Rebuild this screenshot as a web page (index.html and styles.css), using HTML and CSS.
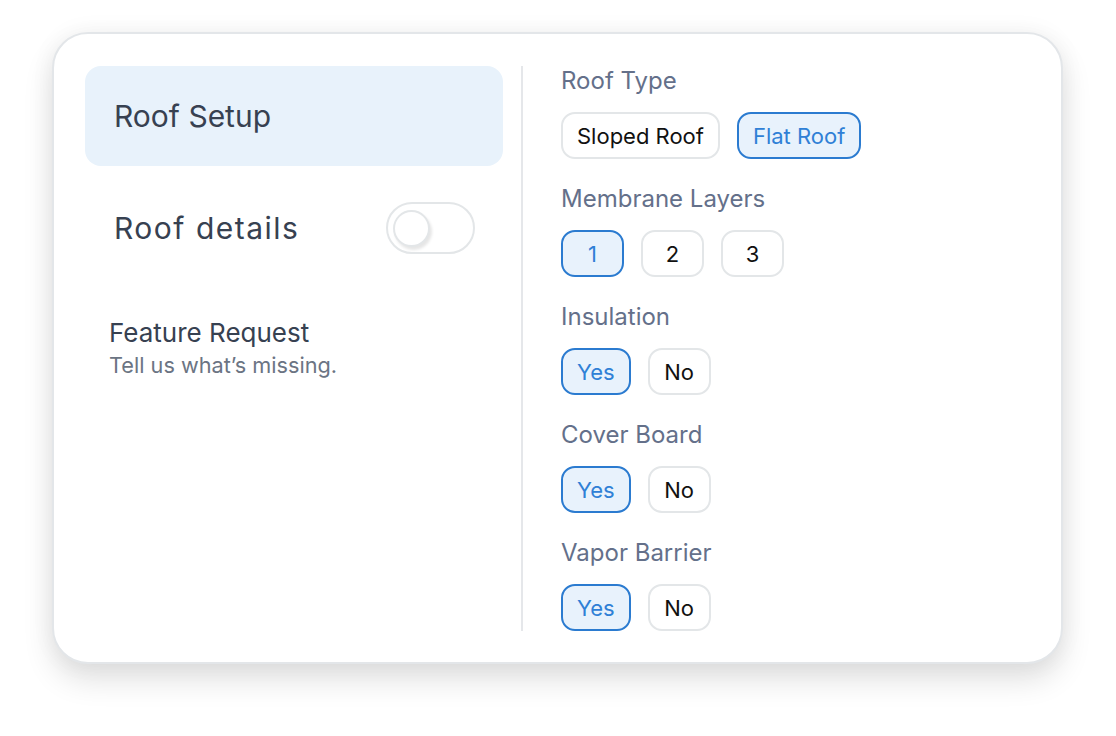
FILE: index.html
```html
<!DOCTYPE html>
<html lang="en">
<head>
<meta charset="utf-8">
<title>Roof Setup</title>
<link rel="stylesheet" href="styles.css">
</head>
<body>
<div class="card">
  <aside class="side">
    <div class="nav-item active">Roof Setup</div>
    <div class="nav-item">
      <span class="nav-wide">Roof details</span>
      <span class="toggle"><span class="knob"></span></span>
    </div>
    <div class="feature">
      <div class="feature-title">Feature Request</div>
      <div class="feature-sub">Tell us what’s missing.</div>
    </div>
  </aside>
  <div class="divider"></div>
  <main class="options">
    <section class="group">
      <div class="label">Roof Type</div>
      <div class="choices">
        <button class="chip">Sloped Roof</button>
        <button class="chip on">Flat Roof</button>
      </div>
    </section>
    <section class="group">
      <div class="label">Membrane Layers</div>
      <div class="choices">
        <button class="chip on">1</button>
        <button class="chip">2</button>
        <button class="chip">3</button>
      </div>
    </section>
    <section class="group">
      <div class="label">Insulation</div>
      <div class="choices">
        <button class="chip on">Yes</button>
        <button class="chip">No</button>
      </div>
    </section>
    <section class="group">
      <div class="label">Cover Board</div>
      <div class="choices">
        <button class="chip on">Yes</button>
        <button class="chip">No</button>
      </div>
    </section>
    <section class="group">
      <div class="label">Vapor Barrier</div>
      <div class="choices">
        <button class="chip on">Yes</button>
        <button class="chip">No</button>
      </div>
    </section>
  </main>
</div>
</body>
</html>
```
FILE: styles.css
```css
* { box-sizing: border-box; }
html, body { margin: 0; padding: 0; background: #ffffff; min-height: 100vh; }
body {
  font-family: Inter, "Noto Sans", "Liberation Sans", sans-serif;
  padding: 32px 0 0 52px;
}
.card {
  width: 1011px;
  display: flex;
  background: #fff;
  border: 2px solid #e3e6e9;
  border-radius: 36px;
  padding: 32px 31px 31px 31px;
  box-shadow: 0 16px 30px rgba(0,0,0,0.12), 0 0 24px rgba(0,0,0,0.05);
}
.side {
  width: 418px;
  display: flex;
  flex-direction: column;
}
.nav-item {
  height: 100px;
  display: flex;
  align-items: center;
  justify-content: space-between;
  padding: 0 28px 0 29px;
  border-radius: 16px;
  font-size: 30px;
  color: #374151;
  margin-bottom: 12px;
}
.nav-item.active { background: #e8f2fb; }
.nav-wide { letter-spacing: 1.5px; }
.toggle {
  width: 89px;
  height: 52px;
  border: 2px solid #e3e6e8;
  border-radius: 26px;
  display: flex;
  align-items: center;
  padding-left: 5px;
  background: #fff;
}
.knob {
  width: 37px;
  height: 37px;
  border-radius: 50%;
  border: 2px solid #e3e6e8;
  background: #fff;
  box-shadow: 2px 3px 3px rgba(0,0,0,0.10);
}
.feature {
  margin-top: 27px;
  padding-left: 24px;
}
.feature-title {
  font-size: 26px;
  line-height: 32px;
  color: #374151;
}
.feature-sub {
  margin-top: 2px;
  font-size: 21.7px;
  line-height: 28px;
  color: #6b7483;
}
.divider {
  width: 2px;
  background: #e5e7ea;
  margin: 0 38px 0 18px;
}
.options {
  display: flex;
  flex-direction: column;
  gap: 25px;
}
.label {
  font-size: 24px;
  line-height: 30px;
  color: #64708a;
  margin-bottom: 16px;
}
.choices {
  display: flex;
  gap: 17px;
}
.chip {
  height: 47px;
  min-width: 63px;
  padding: 0 14px;
  border: 2px solid #e3e6e8;
  border-radius: 14px;
  background: #fff;
  font-family: inherit;
  font-size: 22px;
  color: #111;
  cursor: pointer;
}
.chip.on {
  background: #e8f2fc;
  border-color: #2b7bd0;
  color: #2f80d6;
}
```
